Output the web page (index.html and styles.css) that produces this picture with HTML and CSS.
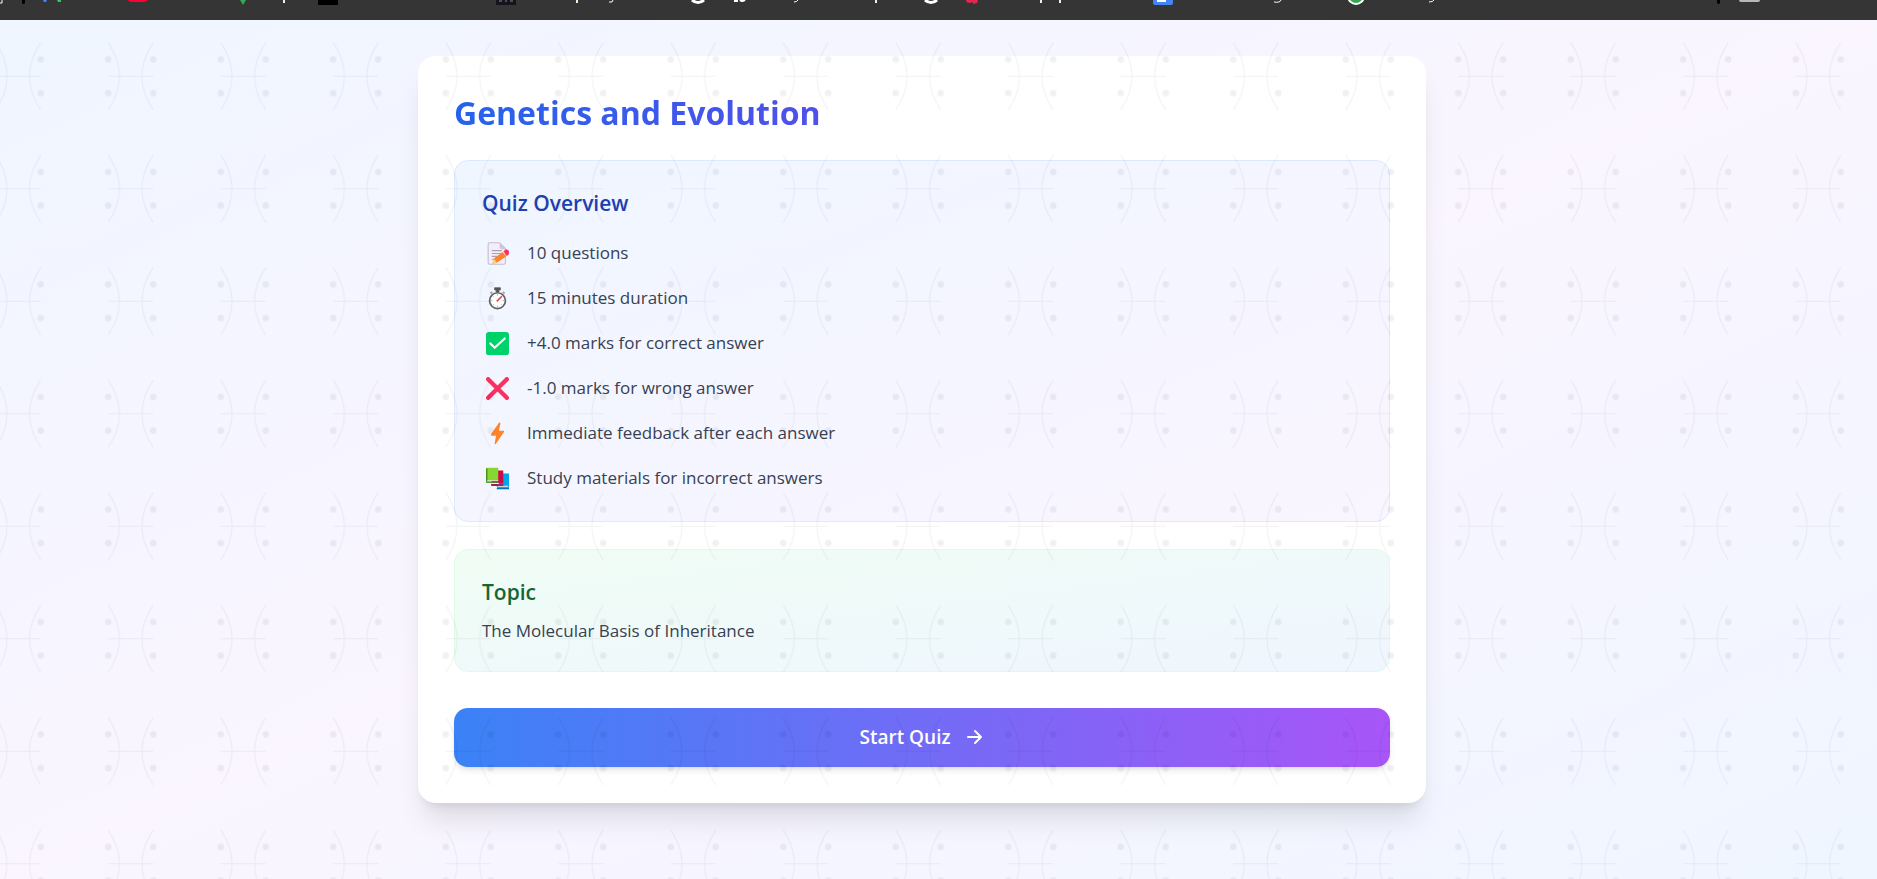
FILE: index.html
```html
<!DOCTYPE html>
<html lang="en">
<head>
<meta charset="utf-8">
<meta name="viewport" content="width=device-width, initial-scale=1">
<title>Genetics and Evolution</title>
<link rel="stylesheet" href="styles.css">
</head>
<body>
<div class="strip" aria-hidden="true">
  <svg class="strip-art" width="100%" height="20">
    <path d="M0 3h2V0" fill="none" stroke="#fff"/>
    <path d="M22 0h3v3l-1 1h-1l-1-1z" fill="#000"/>
    <path d="M43 0h4l-1 2h-2z" fill="#4285f4"/>
    <path d="M57 0h4v2h-3z" fill="#34c759"/>
    <path d="M128 0h20q-2 2-5 2h-10q-4 0-5-2z" fill="#ff0033"/>
    <path d="M240 0h6l-3 5z" fill="#34a853"/>
    <path d="M283 0h2v3h-2z" fill="#f5edda"/>
    <path d="M318 0h20v5h-20z" fill="#000"/>
    <path d="M496 0h20v5h-20z" fill="#14141c"/>
    <path d="M499 1h3m3 0h2m3 0h3" stroke="#888"/>
    <path d="M576 0h2v3h-2z" fill="#f5edda"/>
    <path d="M609 2q4 1 4-2M794 2q3 0 4-2M1274 2q6 1 7-2M1429 2q4 0 5-2" fill="none" stroke="#fff"/>
    <path d="M692 0q6 5 12 0M925 0q6 5 12 0" fill="none" stroke="#fff" stroke-width="3"/>
    <path d="M734 1h4M740 0q2 2 5 0" fill="none" stroke="#fff" stroke-width="2"/>
    <path d="M875 0h2v3h-2zM1040 0h2v3h-2zM1059 0h2v3h-2z" fill="#e9f1f5"/>
    <path d="M966 0h12l-1 3-4 1v-2l-3 1q-4 0-4-3z" fill="#e5264f"/>
    <path d="M1153 0h20v3q0 2-2 2h-16q-2 0-2-2z" fill="#4285f4"/>
    <path d="M1157 0h9v2h-9z" fill="#fff"/>
    <circle cx="1356" cy="-4" r="9" fill="#fff"/>
    <circle cx="1356" cy="-4" r="7" fill="#34a853"/>
    <path d="M1717 0h3v3l-1 1h-1l-1-1z" fill="#000"/>
    <path d="M1739 0h21q0 2-2 2h-17q-2 0-2-2z" fill="#b8b8b8"/>
  </svg>
</div>

<main class="page">
  <section class="card">
    <h1 class="title">Genetics and Evolution</h1>

    <section class="panel panel-overview">
      <h2 class="panel-title">Quiz Overview</h2>
      <ul class="facts">
        <li class="fact">
          <svg class="fact-icon" viewBox="0 0 32 32" aria-hidden="true">
            <path d="M5 1h14l8 8v20q0 2-2 2H5q-2 0-2-2V3q0-2 2-2z" fill="#f3eef8" stroke="#c5bdd0" stroke-width="1.5"/>
            <path d="M19 1v6q0 3 3 3h5z" fill="#cdc4d6"/>
            <path d="M8 12h14M8 16h14M8 20h14M8 24h6" stroke="#aaa0b6" stroke-width="1.5"/>
            <path d="M23 14l5 6-12 8-7 3 2-8z" fill="#ff822d"/>
            <path d="M11 23l4 6-6 2z" fill="#ffce7c"/>
            <path d="M25 13l2-2q2-1 4 1l1 2q0 2-1 3l-2 2z" fill="#f8315f" stroke="#f8315f"/>
          </svg>
          <span>10 questions</span>
        </li>
        <li class="fact">
          <svg class="fact-icon" viewBox="0 0 32 32" aria-hidden="true">
            <path d="M12 1h8v3h-2v3h-4V4h-2z" fill="#555" stroke="#555" stroke-width="1"/>
            <path d="M6 9l3-2M23 7l3 2" stroke="#aaa" stroke-width="3"/>
            <circle cx="16" cy="19" r="11" fill="#fff" stroke="#636363" stroke-width="2.4"/>
            <path d="M16 10v2M16 26v2M7 19h2M23 19h2M10 13l1 1M10 25l1-1M21 24l1 1" stroke="#aaa" stroke-width="1.3"/>
            <path d="M15 20l7-7" stroke="#e8383d" stroke-width="2"/>
          </svg>
          <span>15 minutes duration</span>
        </li>
        <li class="fact">
          <svg class="fact-icon" viewBox="0 0 32 32" aria-hidden="true">
            <rect x="0" y="0" width="32" height="32" rx="4" fill="#00d26a"/>
            <path d="M6 16l6 6L26 9" fill="none" stroke="#fff" stroke-width="3" stroke-linecap="round" stroke-linejoin="round"/>
          </svg>
          <span>+4.0 marks for correct answer</span>
        </li>
        <li class="fact">
          <svg class="fact-icon" viewBox="0 0 32 32" aria-hidden="true">
            <path d="M3 3l26 26M29 3L3 29" stroke="#f8315f" stroke-width="6" stroke-linecap="round"/>
          </svg>
          <span>-1.0 marks for wrong answer</span>
        </li>
        <li class="fact">
          <svg class="fact-icon" viewBox="0 0 32 32" aria-hidden="true">
            <path d="M18 1q2-1 2 1l-2 10h6q2 0 1 2L14 30q-2 2-2 0l2-11H8q-2 0-1-2z" fill="#ff822d"/>
          </svg>
          <span>Immediate feedback after each answer</span>
        </li>
        <li class="fact">
          <svg class="fact-icon" viewBox="0 0 32 32" aria-hidden="true">
            <path d="M16 9h16v21H18q-3 0-3-3z" fill="#00a6ed"/>
            <path d="M16 27h15" stroke="#d3d3d3" stroke-width="2"/>
            <path d="M15 30h17" stroke="#0074ba" stroke-width="2"/>
            <path d="M8 5h16v18h-8v3H8z" fill="#ca0b4a"/>
            <path d="M8 23h10" stroke="#f3eef8" stroke-width="2"/>
            <path d="M7 25h17" stroke="#990838" stroke-width="2"/>
            <path d="M2 1h15v18H0V3q0-2 2-2z" fill="#86d72f"/>
            <path d="M1 2v18" stroke="#44911b" stroke-width="2"/>
            <path d="M2 19h15" stroke="#e0e0e0" stroke-width="1.5"/>
            <path d="M0 21h17" stroke="#44911b" stroke-width="2"/>
          </svg>
          <span>Study materials for incorrect answers</span>
        </li>
      </ul>
    </section>

    <section class="panel panel-topic">
      <h2 class="panel-title">Topic</h2>
      <p class="topic-name">The Molecular Basis of Inheritance</p>
    </section>

    <button class="start" type="button">
      <span>Start Quiz</span>
      <svg class="start-arrow" viewBox="0 0 20 20" aria-hidden="true">
        <path d="M3 9h13M10 3l6 6-6 6" fill="none" stroke="currentColor" stroke-width="2" stroke-linecap="round" stroke-linejoin="round"/>
      </svg>
    </button>
  </section>

  <svg class="motif" aria-hidden="true">
    <defs>
      <pattern id="helix" width="100" height="100" patternUnits="userSpaceOnUse" patternTransform="translate(-38 0) scale(1.125)">
        <path d="M30 20Q50 50 30 80M70 20Q50 50 70 80M30 50H70" fill="none" stroke="#000"/>
        <circle cx="30" cy="35" r="3"/>
        <circle cx="70" cy="35" r="3"/>
        <circle cx="30" cy="65" r="3"/>
        <circle cx="70" cy="65" r="3"/>
      </pattern>
    </defs>
    <rect width="100%" height="100%" fill="url(#helix)"/>
  </svg>
</main>
</body>
</html>
```
FILE: styles.css
```css
* {
  box-sizing: border-box;
}

body {
  margin: 0;
  min-height: 100vh;
  display: flex;
  flex-direction: column;
  font-family: "Segoe UI", "Open Sans", "Noto Sans", sans-serif;
  font-size: 17px;
  line-height: 27px;
  color: #374151;
}

h1,
h2,
p,
ul {
  margin: 0;
  padding: 0;
}

.strip {
  height: 20px;
  background: #353535;
  overflow: hidden;
}

.strip-art {
  display: block;
}

.page {
  position: relative;
  flex: 1;
  padding: 36px 49px 36px 16px;
  background: linear-gradient(to bottom right, #eff6ff, #faf5ff, #eff6ff);
}

.motif {
  position: absolute;
  inset: 0;
  width: 100%;
  height: 100%;
  opacity: 0.05;
  pointer-events: none;
}

.card {
  max-width: 1008px;
  margin: 0 auto;
  padding: 36px;
  display: flex;
  flex-direction: column;
  background: #fff;
  border-radius: 18px;
  box-shadow: 0 23px 28px -6px rgba(0, 0, 0, 0.1), 0 9px 11px -7px rgba(0, 0, 0, 0.1);
}

.title {
  margin-bottom: 26px;
  font-size: 32px;
  line-height: 42px;
  font-weight: 700;
  color: transparent;
  background: linear-gradient(to right, #2563eb, #9333ea);
  background-clip: text;
  -webkit-background-clip: text;
}

.panel {
  padding: 27px;
  border: 1px solid;
  border-radius: 14px;
}

.panel-overview {
  margin-bottom: 27px;
  border-color: #dbeafe;
  background: linear-gradient(to bottom right, #eff6ff, #faf5ff);
}

.panel-topic {
  margin-bottom: 36px;
  border-color: #dcfce7;
  background: linear-gradient(to bottom right, #f0fdf4, #eff6ff);
}

.panel-title {
  font-size: 21px;
  line-height: 31px;
  font-weight: 600;
}

.panel-overview .panel-title {
  margin-bottom: 18px;
  color: #1e40af;
}

.panel-topic .panel-title {
  margin-bottom: 9px;
  color: #166534;
}

.facts {
  display: flex;
  flex-direction: column;
  gap: 13px;
  list-style: none;
}

.fact {
  display: flex;
  align-items: center;
  gap: 18px;
  padding-left: 4px;
  line-height: 32px;
}

.fact-icon {
  width: 23px;
  height: 23px;
  flex: none;
}

.start {
  display: flex;
  align-items: center;
  justify-content: center;
  gap: 14px;
  padding: 14px 27px;
  border: 0;
  border-radius: 14px;
  font: inherit;
  font-size: 19px;
  line-height: 31px;
  font-weight: 600;
  color: #fff;
  background: linear-gradient(to right, #3b82f6, #a855f7);
  box-shadow: 0 4px 7px -1px rgba(0, 0, 0, 0.1), 0 2px 4px -2px rgba(0, 0, 0, 0.1);
  cursor: pointer;
}

.start-arrow {
  width: 20px;
  height: 20px;
}
```
